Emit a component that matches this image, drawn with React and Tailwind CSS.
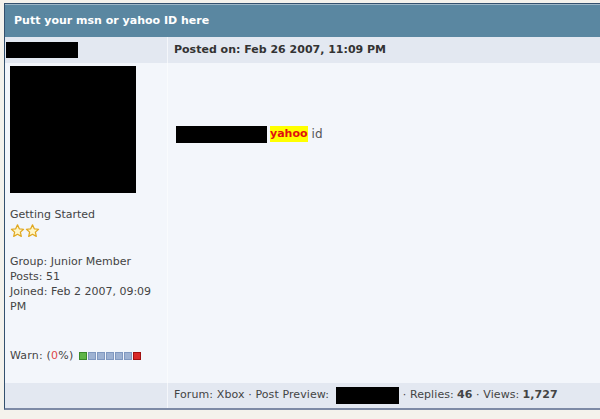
import React from "react";

const Star = () => (
  <svg width="15" height="16" viewBox="0 0 24 24">
    <path
      d="M12 2.2l2.9 6.3 6.8.7-5.1 4.6 1.5 6.8L12 17.1l-6.1 3.5 1.5-6.8-5.1-4.6 6.8-.7z"
      fill="#fff6c8"
      stroke="#e0a820"
      strokeWidth="2"
      strokeLinejoin="round"
    />
  </svg>
);

const Sq = ({ c }) => <span className={c} />;

export default function App() {
  const font = { fontFamily: '"DejaVu Sans", Verdana, sans-serif' };
  return (
    <div className="w-[600px] h-[419px] bg-[#f4f2ec] overflow-hidden pt-[3px] pl-[4px]" style={font}>
      <div className="w-[620px] border-t border-l border-[#33506e] border-b-2 border-b-[#7d8aa6] bg-[#f3f6fb]">
        <div className="h-[33px] bg-[#5a87a1] border-t border-[#9fb8c8] flex items-center pl-[9px] text-white font-bold text-[11px]">
          Putt your msn or yahoo ID here
        </div>
        <div className="flex h-[26px] bg-[#e3e8f1]">
          <div className="w-[163px] border-r border-[#f4f6fa] flex items-center pl-[1px]">
            <div className="w-[72px] h-[16px] bg-black" />
          </div>
          <div className="flex items-center pl-[6px] font-bold text-[11px] text-[#333]">
            Posted on: Feb 26 2007, 11:09 PM
          </div>
        </div>
        <div className="flex h-[320px]">
          <div className="w-[163px] border-r border-[#f9fbfd] pl-[5px] pt-[3px] text-[11px] text-[#444] leading-[15px]">
            <div className="w-[126px] h-[127px] bg-black" />
            <div className="mt-[14px]">Getting Started</div>
            <div className="flex mt-[1px]">
              <Star />
              <Star />
            </div>
            <div className="mt-[15px]">Group: Junior Member</div>
            <div>Posts: 51</div>
            <div>Joined: Feb 2 2007, 09:09</div>
            <div>PM</div>
            <div className="mt-[34px] flex items-center">
              <span className="tracking-[0.2px]">
                Warn: (<span className="text-[#e04848]">0</span>%)
              </span>
              <span className="ml-[6px] flex gap-[1px]">
                <Sq c="w-[8px] h-[8px] bg-[#5fb548] border border-[#3a8a2a]" />
                <Sq c="w-[8px] h-[8px] bg-[#9eb2d2] border border-[#8098c0]" />
                <Sq c="w-[8px] h-[8px] bg-[#9eb2d2] border border-[#8098c0]" />
                <Sq c="w-[8px] h-[8px] bg-[#9eb2d2] border border-[#8098c0]" />
                <Sq c="w-[8px] h-[8px] bg-[#9eb2d2] border border-[#8098c0]" />
                <Sq c="w-[8px] h-[8px] bg-[#9eb2d2] border border-[#8098c0]" />
                <Sq c="w-[8px] h-[8px] bg-[#d82828] border border-[#a01010]" />
              </span>
            </div>
          </div>
          <div className="pl-[8px] pt-[62px] text-[12px] text-[#444]">
            <div className="flex items-center">
              <span className="w-[91px] h-[17px] bg-black" />
              <span className="ml-[3px] bg-[#ffff00] text-[#e01010] font-bold text-[11px] leading-[16px]">yahoo</span>
              <span className="ml-[4px] text-[#555]">id</span>
            </div>
          </div>
        </div>
        <div className="flex h-[25px] bg-[#e3e8f1]">
          <div className="w-[163px] border-r border-[#f4f6fa]" />
          <div className="flex items-center pl-[6px] text-[11px] text-[#444] tracking-[0.1px]">
            Forum: Xbox · Post Preview:
            <span className="ml-[7px] w-[63px] h-[17px] bg-black" />
            &nbsp;· Replies: <b className="ml-[3px]">46</b>&nbsp;· Views: <b className="ml-[3px]">1,727</b>
          </div>
        </div>
      </div>
    </div>
  );
}
